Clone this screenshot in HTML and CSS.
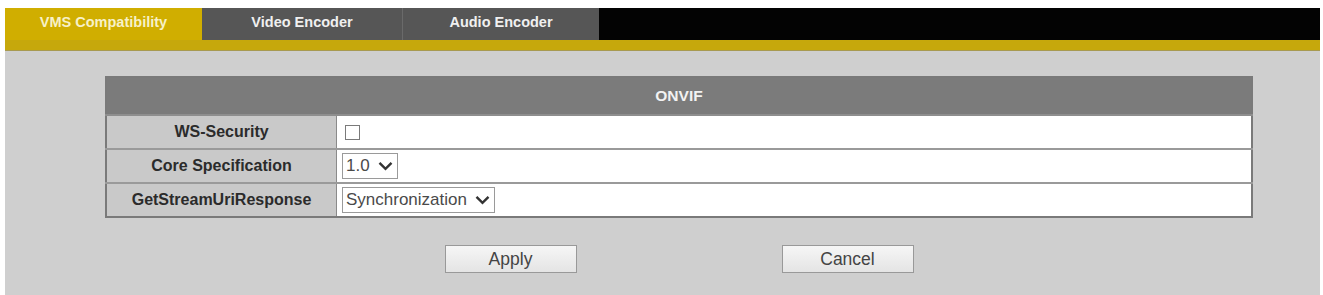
FILE: index.html
```html
<!DOCTYPE html>
<html lang="en">
<head>
    <meta charset="UTF-8">
    <title>VMS Compatibility</title>
    <link rel="stylesheet" href="styles.css">
</head>
<body>
    <div class="page">
        <div class="tabs">
            <div class="tab active">VMS Compatibility</div>
            <div class="tab">Video Encoder</div>
            <div class="tab sep">Audio Encoder</div>
        </div>
        <div class="stripe"></div>

        <div class="panel">
            <table class="onvif">
                <tr>
                    <th colspan="2">ONVIF</th>
                </tr>
                <tr>
                    <td class="label">WS-Security</td>
                    <td class="value"><span class="checkbox"></span></td>
                </tr>
                <tr>
                    <td class="label">Core Specification</td>
                    <td class="value">
                        <span class="select">1.0
                            <svg width="15" height="10" viewBox="0 0 15 10"><path d="M1.5 1.8 L7.5 7.8 L13.5 1.8" fill="none" stroke="#333" stroke-width="2.4"/></svg>
                        </span>
                    </td>
                </tr>
                <tr>
                    <td class="label">GetStreamUriResponse</td>
                    <td class="value">
                        <span class="select">Synchronization
                            <svg width="15" height="10" viewBox="0 0 15 10"><path d="M1.5 1.8 L7.5 7.8 L13.5 1.8" fill="none" stroke="#333" stroke-width="2.4"/></svg>
                        </span>
                    </td>
                </tr>
            </table>

            <div class="actions">
                <button class="btn">Apply</button>
                <button class="btn">Cancel</button>
            </div>
        </div>
    </div>
</body>
</html>
```

FILE: styles.css
```css
body {
    margin: 0;
    background: #fff;
    font-family: "Liberation Sans", Arial, sans-serif;
}

.page {
    margin: 8px 3px 0 5px;
}

.tabs {
    display: flex;
    height: 32px;
    background: #030303;
}

.tab {
    width: 197px;
    padding-top: 6px;
    box-sizing: border-box;
    text-align: center;
    font-size: 14.5px;
    font-weight: bold;
    color: #f0f0f0;
    background: #565656;
}

.tab:nth-child(2) {
    width: 200px;
}

.tab.sep {
    border-left: 1px solid #6a6a6a;
}

.tab.active {
    background: #d0ae00;
    color: #f7f1c8;
}

.stripe {
    height: 10px;
    background: #c6a80c;
    border-bottom: 1px solid #a89a50;
}

.panel {
    height: 244px;
    box-sizing: border-box;
    padding: 25px 67px 0 100px;
    background: #cfcfcf;
}

.onvif {
    width: 1148px;
    border-collapse: collapse;
    border: 2px solid #7a7a7a;
}

.onvif th {
    height: 36px;
    padding: 0;
    background: #7b7b7b;
    color: #f2f2f2;
    font-size: 15.5px;
    font-weight: bold;
    border-bottom: 2px solid #8e8e8e;
}

.onvif td {
    height: 32px;
    padding: 0;
    border: 1px solid #8a8a8a;
    border-top: 2px solid #9a9a9a;
}

.onvif td.label {
    width: 229px;
    text-align: center;
    font-size: 16px;
    font-weight: bold;
    color: #2b2b2b;
    background: #c9c9c9;
}

.onvif td.value {
    padding-left: 5px;
    background: #fff;
}

.checkbox {
    display: block;
    width: 13px;
    height: 13px;
    margin-left: 3px;
    border: 1px solid #7a7a7a;
    background: #fff;
}

.select {
    display: inline-flex;
    align-items: center;
    gap: 8px;
    height: 24px;
    padding: 0 4px 0 3px;
    border: 1px solid #9a9a9a;
    font-size: 17px;
    color: #4a4a4a;
    background: #fff;
    vertical-align: middle;
}

.actions {
    display: flex;
    justify-content: center;
    gap: 205px;
    margin-top: 27px;
}

.btn {
    width: 132px;
    height: 28px;
    padding: 0;
    font-family: "Liberation Sans", Arial, sans-serif;
    font-size: 17.5px;
    color: #444;
    background: linear-gradient(#f6f6f6, #e4e4e4);
    border: 1px solid #999;
    border-radius: 0;
}
```
